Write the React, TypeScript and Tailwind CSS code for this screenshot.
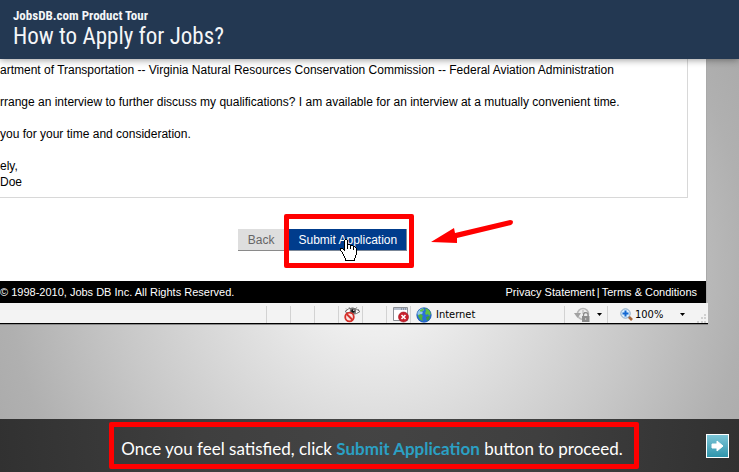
import type { ReactNode } from 'react'

const letterLines = [
  'artment of Transportation -- Virginia Natural Resources Conservation Commission -- Federal Aviation Administration',
  '',
  'rrange an interview to further discuss my qualifications? I am available for an interview at a mutually convenient time.',
  '',
  'you for your time and consideration.',
  '',
  'ely,',
  'Doe',
]

function HandCursor() {
  return (
    <svg
      className="pointer-events-none absolute left-[51px] top-[10px]"
      width="17"
      height="22"
      viewBox="0 0 17 22"
      shapeRendering="crispEdges"
      aria-hidden="true"
    >
      <path
        d="M4.5 1.5 5.5.5H6.5L7.5 1.5V5.5H9.5L10.5 6.5H12.5L13.5 7.5H14.5L16.5 9.5V15.5L15.5 16.5V18.5L14.5 19.5V21.5H5.5V19.5L4.5 18.5V17.5L3.5 16.5V15.5L2.5 14.5V13.5L.5 11.5V9.5H2.5L4.5 11.5Z"
        fill="#fff"
        stroke="#000"
      />
      <path d="M7.5 6v4M10.5 7v3M13.500 8v3" stroke="#000" />
    </svg>
  )
}

function Arrow() {
  return (
    <svg
      className="pointer-events-none absolute left-full top-[-10px] ml-6"
      width="84"
      height="30"
      viewBox="0 0 84 30"
      aria-hidden="true"
    >
      <path d="M0 23 23 9 24 14 79 1Q82 1 82 3T80 6L26 19 26 24Z" fill="#f00" />
    </svg>
  )
}

function PrivacyIcon() {
  return (
    <svg width="17" height="17" viewBox="0 0 17 17" aria-hidden="true">
      <path d="M1 5.500Q8 -1.500 16 5.500Q9 11 1 5.500Z" fill="#fff" stroke="#6b6b6b" />
      <path d="M2 2.500 3.500 4M5 1l.8 1.500M13 1l-1 1.500M15 3l-1 1" stroke="#777" strokeWidth=".7" />
      <circle cx="9" cy="5" r="3.200" fill="#777" />
      <circle cx="9" cy="5" r="1.800" fill="#111" />
      <circle cx="9.800" cy="4.200" r=".7" fill="#fff" />
      <circle cx="5.500" cy="11" r="4.300" fill="#fbe3e0" stroke="#d6302a" strokeWidth="1.800" />
      <path d="m2.600 8 6 6" stroke="#d6302a" strokeWidth="1.800" />
    </svg>
  )
}

function BlockedIcon() {
  return (
    <svg width="17" height="17" viewBox="0 0 17 17" aria-hidden="true">
      <path d="M1.500 1.500h14v13h-14z" fill="#fff" stroke="#8d9096" />
      <path d="M2 2h13v2H2z" fill="#b7bfce" />
      <path d="M9 3h1M11 3h1M13 3h1" stroke="#5d6a85" />
      <circle cx="11.500" cy="11" r="5" fill="#c9202c" stroke="#9c1420" strokeWidth=".6" />
      <path d="m9.500 9 4 4m0-4-4 4" stroke="#fff" strokeWidth="1.600" />
    </svg>
  )
}

function GlobeIcon() {
  return (
    <svg width="16" height="16" viewBox="0 0 16 16" aria-hidden="true">
      <circle cx="8" cy="8" r="7.500" fill="#2b6fd6" />
      <path d="M1 6Q3 1.500 7 1L8 3 6 4.500 7 6 4.500 8 4 10 2 8.500Z" fill="#8fc7ee" />
      <path d="M2 8 5 7l2 2-1 2 1 3q-4-1-5-6z" fill="#4fb23a" />
      <path d="M9 1q5 1 6 6l-2 2-1-2-2 1-1-2 1-2z" fill="#5fc045" />
      <path d="m10 10 3-1 1 1q-1 3-3 4z" fill="#3c9e3a" />
      <path d="M3.500 3.500 7 1.500 8 3 5 5z" fill="#5fc045" />
      <circle cx="8" cy="8" r="7.200" fill="none" stroke="#1d4f96" strokeOpacity=".4" />
    </svg>
  )
}

function ProtectedIcon() {
  return (
    <svg width="17" height="15" viewBox="0 0 17 15" aria-hidden="true">
      <circle cx="9" cy="7" r="5.500" fill="#ececec" stroke="#b9b9b9" strokeWidth="1.500" />
      <path d="M0 6h7l-3.500 5z" fill="#a2a2a2" />
      <path d="M9 3v4l2-2" fill="none" stroke="#b0b0b0" />
      <path d="M9.500 9V8a2.300 2.300 0 0 1 4.600 0v1" fill="none" stroke="#8a8a8a" strokeWidth="1.200" />
      <path d="M8 9h7.500v6H8z" fill="#8c8c8c" />
      <path d="M11.700 11v2" stroke="#ccc" />
    </svg>
  )
}

function ZoomIcon() {
  return (
    <svg width="13" height="13" viewBox="0 0 13 13" aria-hidden="true">
      <path d="m8.500 8.500 3.500 3.500" stroke="#a8683c" strokeWidth="2.600" />
      <circle cx="5.500" cy="5.500" r="4.700" fill="#d9ecfb" stroke="#86a5c4" />
      <path d="M5.500 2.500v6M2.500 5.500h6" stroke="#1468d2" strokeWidth="2" />
    </svg>
  )
}

function Caret() {
  return (
    <svg width="5" height="3" viewBox="0 0 5 3" aria-hidden="true">
      <path d="M0 0h5L2.500 3z" fill="#000" />
    </svg>
  )
}

function Grip() {
  return (
    <svg width="9" height="9" viewBox="0 0 9 9" fill="#d0d0d0" aria-hidden="true">
      <path d="M7 0h2v2H7zM4 3h2v2H4zM7 3h2v2H7zM0 7h2v2H0zM4 7h2v2H4zM7 7h2v2H7z" />
    </svg>
  )
}

function StatusCell({ children }: { children?: ReactNode }) {
  return (
    <div className="flex w-6 shrink-0 items-center border-l border-[#d2d2d2] pl-[5px]">{children}</div>
  )
}

function StatusBar() {
  return (
    <div className="flex h-[21px] justify-end border-b border-black bg-[#f3f3f3] pt-[3px] font-['DejaVu_Sans_Condensed','DejaVu_Sans',sans-serif] text-[11px] leading-4 text-black shadow-[0_1px_0_#8a8a8a]">
      <StatusCell />
      <StatusCell />
      <StatusCell />
      <StatusCell>
        <PrivacyIcon />
      </StatusCell>
      <StatusCell />
      <StatusCell>
        <BlockedIcon />
      </StatusCell>
      <div className="flex w-[154px] shrink-0 items-center gap-1 border-l border-[#d2d2d2] pl-[5px]">
        <GlobeIcon />
        <span>Internet</span>
      </div>
      <button
        type="button"
        aria-label="Protected mode"
        className="flex w-[43px] shrink-0 items-center gap-[6px] border-l border-[#d2d2d2] pl-[9px]"
      >
        <ProtectedIcon />
        <Caret />
      </button>
      <div className="flex w-[101px] shrink-0 border-l border-[#d2d2d2]">
        <button type="button" className="flex flex-1 items-center gap-[2px] pl-3">
          <ZoomIcon />
          <span className="flex-1 text-left">100%</span>
          <Caret />
        </button>
        <div className="flex items-end pl-3 pr-[2px]">
          <Grip />
        </div>
      </div>
    </div>
  )
}

export default function App() {
  return (
    <div className="flex min-h-screen flex-col overflow-hidden bg-[radial-gradient(circle_at_51%_56%,#f2f2f2_0px,#eee_70px,#dcdcdc_160px,#c8c8c8_260px,#b0b0b0_370px,#a8a8a8_440px)] font-['Liberation_Sans',Arial,sans-serif]">
      <header className="relative z-10 h-[59px] bg-[#233852] pl-[13px] pt-2 font-['Roboto_Condensed',Roboto,sans-serif] text-[#f4f6f8] shadow-[0_1px_7px_rgba(0,0,0,0.4)]">
        <p className="text-[13px] font-bold leading-[15px]">JobsDB.com Product Tour</p>
        <h1 className="text-[23px] leading-[27px]">How to Apply for Jobs?</h1>
      </header>

      <main className="flex-1">
        <div className="mr-[31px]">
          <div className="mr-[1px] border-r border-[#a9a9a9] bg-white">
            <div className="mr-[18px] overflow-hidden border-b border-r border-[#d8d8d8] pb-[7px] pt-[3px] text-[12px] leading-4 text-black">
              {letterLines.map((line, i) => (
                <p key={i} className="min-h-4 whitespace-nowrap">
                  {line}
                </p>
              ))}
            </div>
            <div className="flex justify-center gap-1 pb-[30px] pr-[61px] pt-[31px] text-[12px]">
              <button
                type="button"
                className="h-[22px] border-b border-r border-[#8a8a8a] bg-[#dedede] px-[10px] text-[#666]"
              >
                Back
              </button>
              <div className="relative">
                <button
                  type="button"
                  className="h-[22px] border-b border-r border-[#7b8797] bg-[#003c8c] px-[9px] text-white"
                >
                  Submit Application
                </button>
                <div className="pointer-events-none absolute -bottom-[17px] -left-[5px] -right-[7px] -top-[15px] rounded-[2px] border-[5px] border-[#f00]" />
                <HandCursor />
                <Arrow />
              </div>
            </div>
            <div className="flex h-[22px] items-center justify-between bg-black pr-[9px] text-[11px] text-white">
              <span>© 1998-2010, Jobs DB Inc. All Rights Reserved.</span>
              <nav className="flex gap-[2px]">
                <a href="#privacy">Privacy Statement</a>
                <span>|</span>
                <a href="#terms">Terms &amp; Conditions</a>
              </nav>
            </div>
          </div>
          <StatusBar />
        </div>
      </main>

      <footer className="grid h-[53px] grid-cols-[1fr_auto_1fr] items-center bg-[radial-gradient(circle_at_50%_0%,#444_0%,#3f3f3f_45%,#313131_100%)] pl-[9px]">
        <p className="col-start-2 rounded-[2px] border-[5px] border-[#f00] pb-[5px] pl-[7px] pr-[11px] pt-[11px] font-[Lato,sans-serif] text-[17px] leading-[21px] text-white">
          Once you feel satisfied, click <strong className="font-bold text-[#2ba0c4]">Submit Application</strong>{' '}
          button to proceed.
        </p>
        <button
          type="button"
          aria-label="Next"
          className="mr-[10px] flex h-6 w-[23px] items-center justify-center justify-self-end border border-white bg-linear-to-b from-[#7cc6d8] to-[#2d95ac]"
        >
          <svg width="13" height="12" viewBox="0 0 13 12" aria-hidden="true">
            <path d="M1 4h5V1l6 5-6 5V8H1z" fill="#fff" stroke="#fff" strokeLinejoin="round" />
          </svg>
        </button>
      </footer>
    </div>
  )
}
